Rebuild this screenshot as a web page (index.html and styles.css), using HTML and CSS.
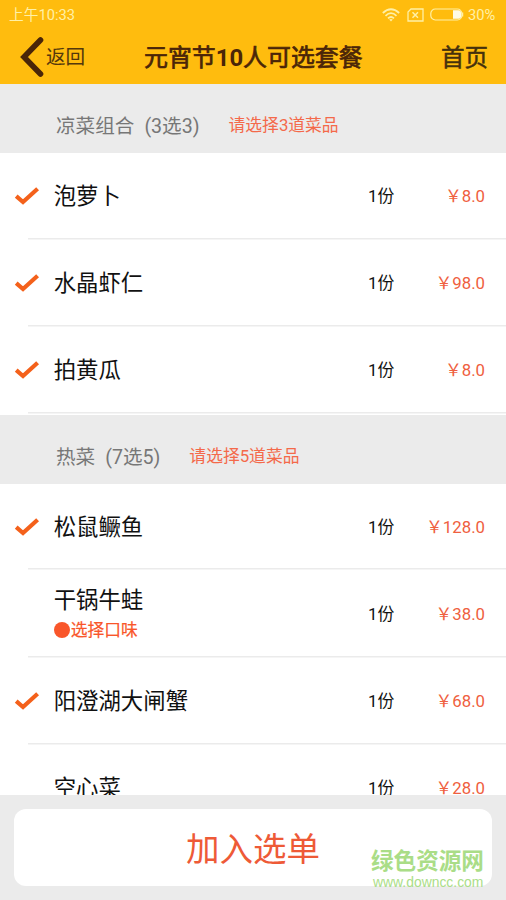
FILE: index.html
```
<!DOCTYPE html>
<html lang="zh-CN">
<head>
<meta charset="utf-8">
<title>元宵节10人可选套餐</title>
<link rel="stylesheet" href="styles.css">
</head>
<body>
<svg class="defs" width="0" height="0" aria-hidden="true">
  <symbol id="check" viewBox="0 0 26 22"><path d="M2.200 11.200 9 17 23.600 3.800" fill="none" stroke="#f4611b" stroke-width="4.200"/></symbol>
</svg>
<div class="screen">
  <header class="top">
    <div class="status">
      <span class="clock">上午10:33</span>
      <svg class="wifi" viewBox="0 0 18 14"><g fill="none" stroke="currentColor" stroke-width="1.7"><path d="M.8 5Q9-2.5 17.200 5"/><path d="M3.500 7.800Q9 2.600 14.500 7.800"/><path d="M6 10.400Q9 7.600 12 10.400"/></g><path d="M7.200 11.600Q9 10.200 10.800 11.600L9 13.500Z" fill="currentColor"/></svg>
      <svg class="sim" viewBox="0 0 17 14"><path d="M4 1H16V13H1V4Z" fill="none" stroke="currentColor" stroke-width="1.300"/><path d="M5.500 4.300 11 9.800M11 4.300 5.500 9.800" stroke="currentColor" stroke-width="1.500"/></svg>
      <svg class="battery" viewBox="0 0 34 13"><rect x=".8" y="1" width="31" height="11" rx="4.500" fill="none" stroke="currentColor" stroke-width="1.200"/><path d="M23 2.200h5.500q2.500 0 2.500 2.500v3.600q0 2.500-2.500 2.500H23Z" fill="#fffbe6"/><path d="M32.500 4.500v4" stroke="currentColor" stroke-width="1.500"/></svg>
      <span class="percent">30%</span>
    </div>
    <nav class="bar">
      <a class="back"><svg class="chevron" viewBox="0 0 24 40"><path d="M20.500 3 4 20 20.500 37" fill="none" stroke="#4a2508" stroke-width="5.600" stroke-linecap="round"/></svg><span>返回</span></a>
      <h1 class="title">元宵节<b>10</b>人可选套餐</h1>
      <a class="home">首页</a>
    </nav>
  </header>
  <main class="menu">
    <section>
      <div class="group"><h2>凉菜组合<span class="rule">(3选3)</span></h2><p class="hint">请选择3道菜品</p></div>
      <ul class="dishes">
        <li class="dish"><svg class="tick"><use href="#check"/></svg><div class="name">泡萝卜</div><span class="qty">1份</span><span class="price">&#65509;8.0</span></li>
        <li class="dish"><svg class="tick"><use href="#check"/></svg><div class="name">水晶虾仁</div><span class="qty">1份</span><span class="price">&#65509;98.0</span></li>
        <li class="dish"><svg class="tick"><use href="#check"/></svg><div class="name">拍黄瓜</div><span class="qty">1份</span><span class="price">&#65509;8.0</span></li>
      </ul>
    </section>
    <section>
      <div class="group"><h2>热菜<span class="rule">(7选5)</span></h2><p class="hint">请选择5道菜品</p></div>
      <ul class="dishes">
        <li class="dish"><svg class="tick"><use href="#check"/></svg><div class="name">松鼠鳜鱼</div><span class="qty">1份</span><span class="price">&#65509;128.0</span></li>
        <li class="dish"><span></span><div class="name">干锅牛蛙<span class="flavor"><i class="dot"></i>选择口味</span></div><span class="qty">1份</span><span class="price">&#65509;38.0</span></li>
        <li class="dish"><svg class="tick"><use href="#check"/></svg><div class="name">阳澄湖大闸蟹</div><span class="qty">1份</span><span class="price">&#65509;68.0</span></li>
        <li class="dish"><span></span><div class="name">空心菜</div><span class="qty">1份</span><span class="price">&#65509;28.0</span></li>
      </ul>
    </section>
  </main>
  <footer class="footer">
    <button class="submit">加入选单</button>
    <div class="watermark"><b>绿色资源网</b><span>www.downcc.com</span></div>
  </footer>
</div>
</body>
</html>
```
FILE: styles.css
```
* { box-sizing: border-box; margin: 0; padding: 0; }
body { font-family: Roboto, "Noto Sans CJK SC", sans-serif; background: #ebebeb; }
.defs { position: absolute; }
.screen { display: flex; flex-direction: column; width: 506px; height: 900px; overflow: hidden; }
.top { flex: none; height: 84px; background: #ffbc0e; }
.status { display: flex; align-items: center; height: 29px; padding: 0 8px 0 9px; color: #fff0a6; font-size: 14.7px; line-height: 29px; }
.clock { flex: 1; padding-top: 1px; }
.wifi { width: 18px; height: 14px; margin-right: 7px; }
.sim { width: 17px; height: 14px; margin-right: 6px; }
.battery { width: 34px; height: 13px; margin-right: 4px; }
.percent { width: 30px; padding-top: 1px; white-space: nowrap; }
.bar { display: grid; grid-template-columns: 144px 1fr auto; align-items: center; height: 55px; padding: 0 18px 0 0; line-height: 30px; }
.back { display: flex; align-items: center; padding-left: 20px; font-size: 19.6px; color: #54380c; }
.back span { padding-top: 2px; }
.chevron { width: 24px; height: 40px; margin-right: 2px; }
.title { padding-top: 2px; font-size: 23.9px; font-weight: 400; color: #4a2508; -webkit-text-stroke: .7px #4a2508; white-space: nowrap; }
.title b { font-weight: 700; -webkit-text-stroke: 0; }
.home { padding-top: 2px; font-size: 23.5px; color: #45300c; -webkit-text-stroke: .5px #45300c; }
.menu { flex: 1; min-height: 0; overflow: hidden; background: #fff; }
.group { display: flex; height: 69px; padding: 0 0 0 56px; background: #ebebeb; }
.group h2 { padding-top: 28px; font-size: 19.6px; line-height: 30px; font-weight: 400; color: #777; }
.rule { margin-left: 10px; }
.hint { margin-left: 29px; padding-top: 26px; font-size: 16.8px; line-height: 30px; color: #f4694a; }
.dishes { list-style: none; }
.dish { display: grid; grid-template-columns: 39px 1fr 57px 60px; align-items: center; height: 87.3px; padding: 0 21px 2px 15px; background: linear-gradient(#ebebeb, #ebebeb) 28px 84.500px / 100% 1.500px no-repeat; }
.tick { width: 26px; height: 22px; margin-left: -1px; }
.name { margin-left: -.3px; font-size: 22.4px; line-height: 32px; color: #111; }
.flavor { display: flex; align-items: center; font-size: 16.8px; line-height: 28px; color: #f9562a; -webkit-text-stroke: .2px #f9562a; }
.dot { width: 16px; height: 16px; margin-right: 1px; border-radius: 50%; background: #f9562a; }
.qty { font-size: 16.8px; line-height: 24px; color: #111; }
.price { justify-self: end; font-size: 16.8px; line-height: 24px; color: #ef6040; white-space: nowrap; }
.footer { position: relative; flex: none; height: 105px; padding: 14px; background: #ebebeb; }
.submit { display: block; width: 478px; height: 77px; padding-top: 5px; border: 0; border-radius: 12px; background: #fff; font: 33.5px/72px Roboto, "Noto Sans CJK SC", sans-serif; color: #ee5a37; }
.watermark { position: absolute; left: 371px; top: 53px; color: #aadd87; white-space: nowrap; }
.watermark b { display: block; font-size: 22.6px; line-height: 28px; }
.watermark span { display: block; margin-left: 2px; font: 13.9px/12px "Liberation Sans", sans-serif; }
```
